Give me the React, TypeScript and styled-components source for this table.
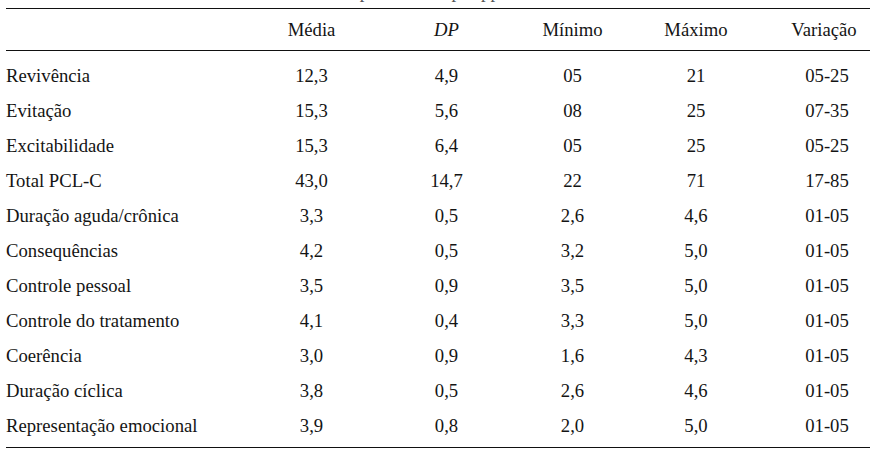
import React from "react";
import styled, { createGlobalStyle } from "styled-components";

const serif = `"Liberation Serif", "Times New Roman", Times, serif`;

const GlobalStyle = createGlobalStyle`
	html, body {
		margin: 0;
		padding: 0;
		background: #ffffff;
	}
	body {
		font-family: ${serif};
		color: #141414;
	}
`;

type Row = {
	label: string;
	values: string[];
};

const rows: Row[] = [
	{ label: "Revivência", values: ["12,3", "4,9", "05", "21", "05-25"] },
	{ label: "Evitação", values: ["15,3", "5,6", "08", "25", "07-35"] },
	{ label: "Excitabilidade", values: ["15,3", "6,4", "05", "25", "05-25"] },
	{ label: "Total PCL-C", values: ["43,0", "14,7", "22", "71", "17-85"] },
	{ label: "Duração aguda/crônica", values: ["3,3", "0,5", "2,6", "4,6", "01-05"] },
	{ label: "Consequências", values: ["4,2", "0,5", "3,2", "5,0", "01-05"] },
	{ label: "Controle pessoal", values: ["3,5", "0,9", "3,5", "5,0", "01-05"] },
	{ label: "Controle do tratamento", values: ["4,1", "0,4", "3,3", "5,0", "01-05"] },
	{ label: "Coerência", values: ["3,0", "0,9", "1,6", "4,3", "01-05"] },
	{ label: "Duração cíclica", values: ["3,8", "0,5", "2,6", "4,6", "01-05"] },
	{ label: "Representação emocional", values: ["3,9", "0,8", "2,0", "5,0", "01-05"] },
];

const App: React.FC = () => {
	return (
		<>
			<GlobalStyle />
			<Page>
				<Caption>Tabela 2. Estatística descritiva das variáveis apresentadas por pp</Caption>
				<Table>
					<HeaderRow>
						<Cell />
						<Cell>Média</Cell>
						<Cell><em>DP</em></Cell>
						<Cell>Mínimo</Cell>
						<Cell>Máximo</Cell>
						<Cell $last>Variação</Cell>
					</HeaderRow>
					<Body>
						{rows.map((row) => (
							<BodyRow key={row.label}>
								<Label>{row.label}</Label>
								{row.values.map((v, i) => (
									<Cell key={i} $last={i === 4} $shift={i === 4 ? 3 : 0}>
										{v}
									</Cell>
								))}
							</BodyRow>
						))}
					</Body>
				</Table>
			</Page>
		</>
	);
};

export default App;

const Page = styled.div`
	width: 878px;
	height: 455px;
	overflow: hidden;
	padding-left: 6px;
	box-sizing: border-box;
	font-family: ${serif};
`;

const Caption = styled.div`
	height: 8px;
	padding-left: 12px;
	font-size: 18.7px;
	line-height: 8px;
	transform: translateY(-12px);
	white-space: nowrap;
	color: #555;
`;

const Table = styled.div`
	width: 864px;
	border-top: 1px solid #111;
	border-bottom: 1px solid #111;
	font-family: ${serif};
	font-size: 18.7px;
`;

const gridCols = `
	display: grid;
	grid-template-columns: 238px 135px 135px 117px 130px 1fr;
	align-items: center;
`;

const HeaderRow = styled.div`
	${gridCols}
	height: 41px;
	border-bottom: 1px solid #111;
`;

const Body = styled.div`
	padding: 7px 0 4px;
`;

const BodyRow = styled.div`
	${gridCols}
	height: 35px;
`;

const Label = styled.div`
	text-align: left;
	white-space: nowrap;
`;

const Cell = styled.div<{ $last?: boolean; $shift?: number }>`
	text-align: center;
	white-space: nowrap;
	padding-left: ${(p) => (p.$last ? 17 + (p.$shift ?? 0) * 2 : 0)}px;

	em {
		font-style: italic;
	}
`;
